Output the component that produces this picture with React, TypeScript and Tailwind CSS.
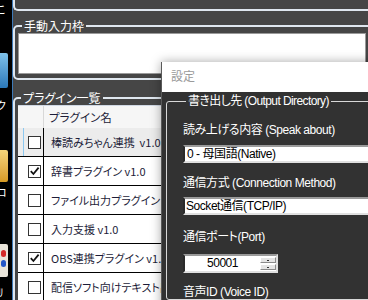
import React from "react";

const jp = "font-['Noto_Sans_CJK_JP',sans-serif] [font-feature-settings:'palt']";
const ui = "font-['Liberation_Sans','Noto_Sans_CJK_JP',sans-serif] [font-feature-settings:'palt']";

const plugins = [
  { name: "棒読みちゃん連携  v1.0", checked: false, focus: true },
  { name: "辞書プラグイン v1.0", checked: true, focus: false },
  { name: "ファイル出力プラグイン v1.0", checked: false, focus: false },
  { name: "入力支援 v1.0", checked: false, focus: false },
  { name: "OBS連携プラグイン v1.3", checked: true, focus: false },
  { name: "配信ソフト向けテキスト出力 v1.0", checked: false, focus: false },
];

function Checkbox({ checked }: { checked: boolean }) {
  return (
    <div className="w-[13px] h-[13px] border border-[#333] bg-white">
      {checked && (
        <svg width="11" height="11" viewBox="0 0 11 11">
          <path d="M1.8 5.2 L4.4 8 L9.6 1.6" stroke="#111" strokeWidth="1.8" fill="none" />
        </svg>
      )}
    </div>
  );
}

function Desktop() {
  return (
    <div className="relative w-[12px] h-full bg-black overflow-hidden">
      <div className={`absolute left-[-4px] top-[3px] text-[11px] leading-[12px] text-white ${jp}`}>こ</div>
      <div className="absolute left-[-6px] top-[53px] w-[14px] h-[35px] rounded-[2px] bg-gradient-to-b from-[#7fc2ea] to-[#2a78b8]" />
      <div className={`absolute left-[-4px] top-[99px] text-[11px] leading-[12px] text-white ${jp}`}>ク</div>
      <div className="absolute left-[-6px] top-[150px] w-[14px] h-[32px] rounded-[2px] bg-gradient-to-b from-[#f5d67a] to-[#d69a22]" />
      <div className={`absolute left-[-4px] top-[186px] text-[11px] leading-[12px] text-white ${jp}`}>ロ</div>
      <div className="absolute left-[-4px] top-[244px] w-[12px] h-[33px] rounded-[2px] bg-[#e9e4da] flex flex-col items-end gap-[3px] pt-[6px] pr-[2px]">
        <div className="w-[5px] h-[7px] rounded-full bg-[#d42a2a]" />
        <div className="w-[5px] h-[7px] rounded-full bg-[#2456c8]" />
      </div>
      <div className={`absolute left-[-2px] top-[286px] text-[11px] leading-[12px] text-white ${jp}`}>ﾘ</div>
    </div>
  );
}

function SettingsWindow() {
  return (
    <div className="absolute left-[161px] top-[62px] w-[230px] h-[260px] border-l border-[#5a5a5a] shadow-[0_0_10px_rgba(0,0,0,0.35)] flex flex-col">
      <div className={`h-[30px] bg-white flex items-center pl-[9px] text-[12px] text-[#9a9a9a] ${ui}`}>設定</div>
      <div className={`flex-1 bg-[#323232] text-white text-[12px] tracking-[-0.45px] ${ui}`}>
        <fieldset className="ml-[4px] mt-[2px] w-[300px] border border-[#d8d8d8] rounded-[3px] pl-4 flex flex-col">
          <legend className="ml-[3px] px-[2px] leading-[14px] tracking-[-0.6px]">書き出し先 (Output Directory)</legend>
          <div className="mt-[15px] leading-[14px]">読み上げる内容 (Speak about)</div>
          <div className="mt-[8px] h-[18px] w-[260px] bg-white border-2 border-t-[#9a9a9a] border-l-[#2a2a2a] border-r-[#e0e0e0] border-b-[#e0e0e0] text-black leading-[14px] pl-[2px]">
            0 - 母国語(Native)
          </div>
          <div className="mt-[13px] leading-[14px]">通信方式 (Connection Method)</div>
          <div className="mt-[7px] h-[18px] w-[260px] bg-white border-2 border-t-[#9a9a9a] border-l-[#2a2a2a] border-r-[#e0e0e0] border-b-[#e0e0e0] text-black leading-[14px] pl-[1px]">
            Socket通信(TCP/IP)
          </div>
          <div className="mt-[15px] leading-[14px]">通信ポート(Port)</div>
          <div className="mt-[10px] h-[19px] w-[95px] bg-white border-2 border-t-[#9a9a9a] border-l-[#2a2a2a] border-r-[#e0e0e0] border-b-[#e0e0e0] flex">
            <div className="flex-1 text-black text-center leading-[15px]">50001</div>
            <div className="w-[16px] flex flex-col gap-px py-px">
              <div className="flex-1 bg-[#e4e4e4] border border-t-white border-l-white border-r-[#8a8a8a] border-b-[#8a8a8a] flex items-center justify-center">
                <div className="w-[2px] h-[1px] bg-[#333]" />
              </div>
              <div className="flex-1 bg-[#e4e4e4] border border-t-white border-l-white border-r-[#8a8a8a] border-b-[#8a8a8a] flex items-center justify-center">
                <div className="w-[2px] h-[1px] bg-[#333]" />
              </div>
            </div>
          </div>
          <div className="mt-[12px] leading-[14px]">音声ID (Voice ID)</div>
        </fieldset>
      </div>
    </div>
  );
}

export default function App() {
  return (
    <div className="relative w-[368px] h-[300px] overflow-hidden flex bg-black">
      <Desktop />
      <div className="w-px bg-[#3d7ab8]" />
      <div className={`flex-1 bg-[#464646] flex flex-col overflow-hidden text-[12px] ${jp}`}>
        <div className="h-[11px] w-[400px] shrink-0 border-l-2 border-b-2 border-[#dfe7ef] rounded-bl-[5px]" />
        <fieldset className="mt-[8px] w-[400px] shrink-0 border-2 border-[#dfe7ef] rounded-[5px] pl-[3px] pb-[4px]">
          <legend className="ml-1 px-[2px] leading-[14px] text-white">手動入力枠</legend>
          <div className="h-[41px] w-[348px] bg-white border border-[#9a9a9a]" />
        </fieldset>
        <fieldset className="mt-[11px] w-[400px] h-[260px] shrink-0 border-2 border-[#dfe7ef] rounded-[5px] pl-[3px]">
          <legend className="ml-[3px] px-[2px] leading-[14px] text-white">プラグイン一覧</legend>
          <div className="bg-white text-[#1c1c38] text-[11px]">
            <div className="h-[23px] flex bg-[#f6f6f6] border-t border-[#d0d8e4]">
              <div className="w-[26px] border-r border-[#d8d8d8]" />
              <div className="pl-[5px] leading-[22px] text-[11.5px]">プラグイン名</div>
            </div>
            {plugins.map((p) => (
              <div
                key={p.name}
                className={`h-[29px] flex border-b border-black ${p.focus ? "bg-[#ececec]" : "bg-white"}`}
              >
                <div className="w-[26px] shrink-0 border-r border-black flex items-center pl-[5px]">
                  <div className={`w-px h-full mr-[4px] ${p.focus ? "bg-[#8cc8f0]" : ""}`} />
                  <Checkbox checked={p.checked} />
                </div>
                <div className="pl-[7px] leading-[28px] whitespace-pre">{p.name}</div>
              </div>
            ))}
          </div>
        </fieldset>
      </div>
      <SettingsWindow />
    </div>
  );
}
